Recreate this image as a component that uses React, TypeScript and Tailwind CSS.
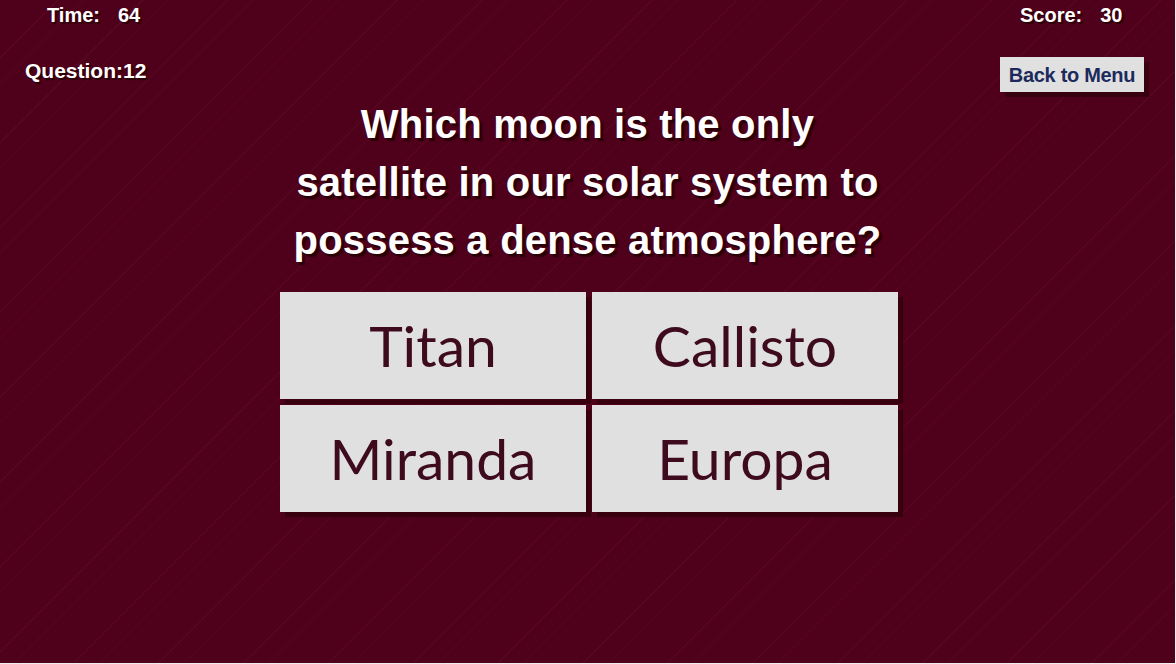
import React from "react";

const display = { fontFamily: '"Liberation Sans", Arial, sans-serif' };
const answerFont = { fontFamily: 'Lato, "Open Sans", sans-serif' };

function Answer({ label }: { label: string }) {
  return (
    <button
      className="h-[107px] bg-[#e0e0e0] text-[#3e0a1d] text-[57px] leading-none flex items-center justify-center shadow-[5px_5px_0_#38000f]"
      style={answerFont}
    >
      {label}
    </button>
  );
}

export default function App() {
  return (
    <div className="w-[1176px] h-[664px] overflow-hidden bg-[#eeeeee]">
      <div
        className="w-[1175px] h-[663px] bg-[#4f001a] bg-[repeating-linear-gradient(135deg,#4f001a_0px,#4f001a_40px,#5a0824_41px,#4f001a_42px,#4f001a_58px,#560521_59px,#4f001a_60px)] flex flex-col text-white"
        style={display}
      >
        <div className="h-[95px] flex justify-between items-start font-bold text-[20px] [text-shadow:2px_2px_1px_#2a0008]">
          <div className="flex flex-col">
            <div className="h-[30px] leading-[30px] pl-[47px] flex">
              <span>Time:</span>
              <span className="ml-[18px]">64</span>
            </div>
            <div className="h-[30px] leading-[30px] pl-[25px] mt-[26px] flex text-[21px]">
              <span>Question:</span>
              <span>12</span>
            </div>
          </div>
          <div className="flex flex-col items-start pr-[31px]">
            <div className="h-[30px] leading-[30px] pl-[20px] flex">
              <span>Score:</span>
              <span className="ml-[18px]">30</span>
            </div>
            <button className="mt-[27px] w-[144px] h-[35px] bg-[#e0e0e0] text-[#1c2a5c] text-[20px] font-bold tracking-[-0.3px] flex items-center justify-center shadow-[5px_5px_0_#38000f] [text-shadow:none]">
              Back to Menu
            </button>
          </div>
        </div>
        <div className="flex justify-center">
          <h1 className="w-[620px] text-center font-bold text-[40px] leading-[58px] tracking-[0.2px] [text-shadow:3px_3px_1px_#2a0008]">
            Which moon is the only
            <br />
            satellite in our solar system to
            <br />
            possess a dense atmosphere?
          </h1>
        </div>
        <div className="mt-[23px] flex justify-center">
          <div className="grid grid-cols-[306px_306px] gap-[6px] pl-[3px]">
            <Answer label="Titan" />
            <Answer label="Callisto" />
            <Answer label="Miranda" />
            <Answer label="Europa" />
          </div>
        </div>
      </div>
    </div>
  );
}
